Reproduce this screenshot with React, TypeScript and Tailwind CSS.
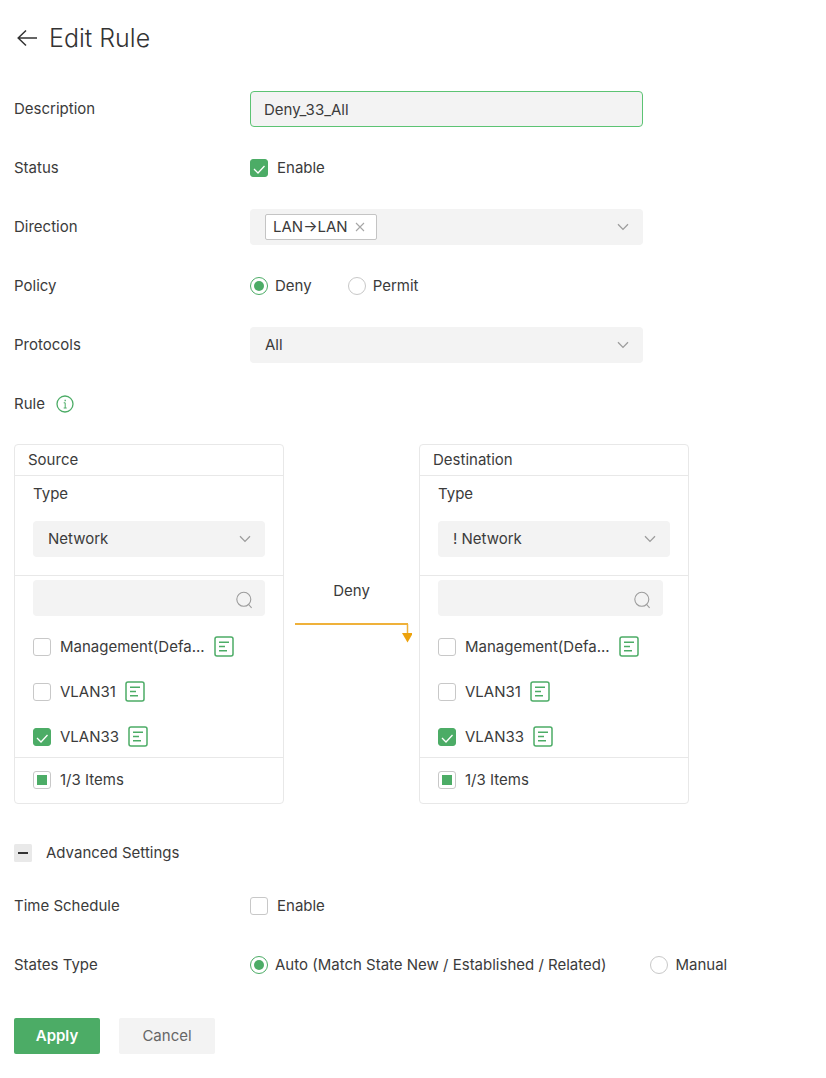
import { ReactNode, useEffect, useRef, useState } from "react";

const networks = [
    { id: "management", name: "Management(Defa..." },
    { id: "vlan31", name: "VLAN31" },
    { id: "vlan33", name: "VLAN33" },
];

interface RowProps {
    label: string;
    htmlFor?: string;
    children: ReactNode;
}

const Row = ({ label, htmlFor, children }: RowProps) => {
    return (
        <div className="flex min-h-9 items-center">
            {htmlFor ? (
                <label htmlFor={htmlFor} className="w-[236px] shrink-0">
                    {label}
                </label>
            ) : (
                <span className="w-[236px] shrink-0">{label}</span>
            )}
            {children}
        </div>
    );
};

const ChevronIcon = () => (
    <svg
        viewBox="0 0 12 8"
        className="pointer-events-none absolute top-1/2 right-3.5 h-2 w-3 -translate-y-1/2"
        fill="none"
        stroke="#9c9c9c"
        strokeWidth="1.3"
    >
        <path d="M1 1.3 L6 6.4 L11 1.3" />
    </svg>
);

const NoteIcon = () => (
    <svg
        viewBox="0 0 20 21"
        className="h-[21px] w-5"
        fill="none"
        stroke="#4cac66"
        strokeWidth="1.5"
    >
        <rect x="1" y="1" width="18" height="19" rx="2" />
        <path d="M5 6.3 H15 M5 10.5 H11 M5 14.8 H13" />
    </svg>
);

interface SelectProps {
    id: string;
    options: string[];
}

const Select = ({ id, options }: SelectProps) => {
    return (
        <div className="relative w-full">
            <select
                id={id}
                className="block h-9 w-full appearance-none rounded-sm bg-[#f3f3f3] px-[15px] outline-none"
            >
                {options.map((option) => (
                    <option key={option}>{option}</option>
                ))}
            </select>
            <ChevronIcon />
        </div>
    );
};

interface CheckboxProps {
    label: string;
    defaultChecked?: boolean;
}

const Checkbox = ({ label, defaultChecked }: CheckboxProps) => {
    return (
        <label className="flex items-center gap-[9px]">
            <span className="relative block size-[18px]">
                <input
                    type="checkbox"
                    defaultChecked={defaultChecked}
                    className="peer block size-full appearance-none rounded-[3px] border border-[#c8c8c8] bg-white checked:border-[#4cac66] checked:bg-[#4cac66]"
                />
                <svg
                    viewBox="0 0 18 18"
                    className="pointer-events-none absolute inset-0 hidden size-full peer-checked:block"
                    fill="none"
                    stroke="#ffffff"
                    strokeWidth="1.3"
                >
                    <path d="M4 10 L8 14 L14.5 7" />
                </svg>
            </span>
            <span>{label}</span>
        </label>
    );
};

interface RadioProps {
    name: string;
    label: string;
    defaultChecked?: boolean;
}

const Radio = ({ name, label, defaultChecked }: RadioProps) => {
    return (
        <label className="flex items-center gap-[7px]">
            <input
                type="radio"
                name={name}
                defaultChecked={defaultChecked}
                className="grid size-[18px] shrink-0 appearance-none place-items-center rounded-full border border-[#c8c8c8] bg-white before:size-2.5 before:rounded-full checked:border-[#4cac66] checked:before:bg-[#4cac66]"
            />
            <span>{label}</span>
        </label>
    );
};

interface NetworkPanelProps {
    id: string;
    title: string;
    type: string;
    searchClassName: string;
}

const NetworkPanel = ({
    id,
    title,
    type,
    searchClassName,
}: NetworkPanelProps) => {
    const allRef = useRef<HTMLInputElement>(null);

    useEffect(() => {
        if (allRef.current) {
            allRef.current.indeterminate = true;
        }
    }, []);

    return (
        <section className="w-[270px] rounded-sm border border-[#e8e8e8]">
            <h2 className="border-b border-[#e8e8e8] px-[13px] py-[5px]">
                {title}
            </h2>
            <div className="border-b border-[#e8e8e8] px-[18px] pt-2 pb-[18px]">
                <label htmlFor={`${id}-type`} className="mb-[17px] block">
                    Type
                </label>
                <Select id={`${id}-type`} options={[type]} />
            </div>
            <div className="px-[18px] pt-1 pb-2.5">
                <div className={`relative ${searchClassName}`}>
                    <input
                        type="search"
                        aria-label={`Search ${title}`}
                        className="block h-9 w-full rounded-sm bg-[#f3f3f3] pr-10 pl-4 outline-none"
                    />
                    <svg
                        viewBox="0 0 18 18"
                        className="pointer-events-none absolute top-[11px] right-3 size-[18px]"
                        fill="none"
                        stroke="#9c9c9c"
                        strokeWidth="1.1"
                    >
                        <circle cx="8.8" cy="8.3" r="7" />
                        <path d="M13.2 13 L16.6 16.8" />
                    </svg>
                </div>
                <ul className="mt-5 space-y-6">
                    {networks.map((network) => (
                        <li
                            key={network.id}
                            className="flex h-[21px] items-center gap-[9px]"
                        >
                            <Checkbox
                                label={network.name}
                                defaultChecked={network.id === "vlan33"}
                            />
                            <button
                                type="button"
                                aria-label={`${network.name} details`}
                            >
                                <NoteIcon />
                            </button>
                        </li>
                    ))}
                </ul>
            </div>
            <label className="flex items-center gap-[9px] border-t border-[#e8e8e8] px-[18px] pt-3 pb-[13px]">
                <input
                    ref={allRef}
                    type="checkbox"
                    className="grid size-[18px] appearance-none place-items-center rounded-[3px] border border-[#c8c8c8] bg-white before:size-2.5 indeterminate:before:bg-[#4cac66]"
                />
                <span>1/3 Items</span>
            </label>
        </section>
    );
};

export default function App() {
    const [directions, setDirections] = useState(["LAN→LAN"]);
    const [advancedOpen, setAdvancedOpen] = useState(true);

    return (
        <form
            className="min-h-screen bg-white px-3.5 pt-5 pb-6 font-['Inter',sans-serif] text-[15px] leading-5 text-[#3b3b3b]"
            onSubmit={(e) => e.preventDefault()}
        >
            <header className="flex h-9 items-center gap-3">
                <button type="button" aria-label="Back" className="pl-[3px]">
                    <svg
                        viewBox="0 0 20 18"
                        className="h-[18px] w-5"
                        fill="none"
                        stroke="#333333"
                        strokeWidth="1.5"
                    >
                        <path d="M20 9 H1.2 M9 1.5 L1.2 9 L9 16.5" />
                    </svg>
                </button>
                <h1 className="text-[25px] font-light text-[#333333]">
                    Edit Rule
                </h1>
            </header>

            <div className="mt-[35px] space-y-[23px]">
                <Row label="Description" htmlFor="description">
                    <input
                        id="description"
                        type="text"
                        defaultValue="Deny_33_All"
                        className="h-9 w-full max-w-[393px] rounded-sm border border-[#5cc373] bg-[#f3f3f3] px-[13px] outline-none"
                    />
                </Row>
                <Row label="Status">
                    <Checkbox label="Enable" defaultChecked />
                </Row>
                <Row label="Direction" htmlFor="direction">
                    <div className="relative flex h-9 w-full max-w-[393px] items-center rounded-sm bg-[#f3f3f3] pl-[15px]">
                        {directions.map((direction) => (
                            <span
                                key={direction}
                                className="flex h-[26px] items-center gap-[7px] rounded-xs border border-[#c4c4c4] bg-white px-[7px]"
                            >
                                {direction}
                                <button
                                    type="button"
                                    aria-label={`Remove ${direction}`}
                                    onClick={() => setDirections([])}
                                    className="pr-1"
                                >
                                    <svg
                                        viewBox="0 0 10 10"
                                        className="size-2.5"
                                        stroke="#a6a6a6"
                                        strokeWidth="1.1"
                                    >
                                        <path d="M1 1 L9 9 M9 1 L1 9" />
                                    </svg>
                                </button>
                            </span>
                        ))}
                        <select
                            id="direction"
                            className="h-full flex-1 appearance-none bg-transparent outline-none"
                        >
                            <option value="" />
                        </select>
                        <ChevronIcon />
                    </div>
                </Row>
                <Row label="Policy">
                    <div className="flex gap-9">
                        <Radio name="policy" label="Deny" defaultChecked />
                        <Radio name="policy" label="Permit" />
                    </div>
                </Row>
                <Row label="Protocols" htmlFor="protocols">
                    <div className="w-full max-w-[393px]">
                        <Select id="protocols" options={["All"]} />
                    </div>
                </Row>
                <div className="flex h-9 items-center gap-[11px]">
                    <span>Rule</span>
                    <svg
                        viewBox="0 0 18 18"
                        className="size-[18px]"
                        fill="none"
                        stroke="#4cac66"
                        strokeWidth="1.3"
                    >
                        <circle cx="9" cy="9" r="8" />
                        <path d="M7.7 7.8 H9.2 V13 M7.7 13 H10.7" strokeWidth="1" />
                        <path d="M9.2 4.8 V6.2" />
                    </svg>
                </div>
            </div>

            <div className="mt-[22px] flex">
                <NetworkPanel
                    id="source"
                    title="Source"
                    type="Network"
                    searchClassName="w-full"
                />
                <div className="flex w-[135px] flex-col items-center pt-[137px]">
                    <span>Deny</span>
                    <svg
                        viewBox="0 0 120 22"
                        className="mt-5 h-[22px] w-[120px]"
                        fill="none"
                        stroke="#efb13a"
                    >
                        <path d="M3 3 H116" strokeWidth="2" />
                        <path d="M115.5 3 V13" strokeWidth="1.5" />
                        <path
                            d="M110 12 H121 L115.5 21.5 Z"
                            fill="#eda20c"
                            stroke="none"
                        />
                    </svg>
                </div>
                <NetworkPanel
                    id="destination"
                    title="Destination"
                    type="! Network"
                    searchClassName="mr-[7px]"
                />
            </div>

            <button
                type="button"
                aria-expanded={advancedOpen}
                onClick={() => setAdvancedOpen(!advancedOpen)}
                className="mt-[39px] flex items-center gap-3.5"
            >
                <svg viewBox="0 0 18 18" className="size-[18px]">
                    <rect width="18" height="18" rx="1.5" fill="#e9e9e9" />
                    <path d="M4 9 H14" stroke="#333333" strokeWidth="2" />
                </svg>
                <span>Advanced Settings</span>
            </button>

            {advancedOpen && (
                <div className="mt-[25px] space-y-[23px]">
                    <Row label="Time Schedule">
                        <Checkbox label="Enable" />
                    </Row>
                    <Row label="States Type">
                        <div className="flex gap-11">
                            <Radio
                                name="states"
                                label="Auto (Match State New / Established / Related)"
                                defaultChecked
                            />
                            <Radio name="states" label="Manual" />
                        </div>
                    </Row>
                </div>
            )}

            <div className="mt-[35px] flex gap-[19px]">
                <button
                    type="submit"
                    className="h-9 w-[86px] rounded-xs bg-[#4cac66] font-semibold text-white"
                >
                    Apply
                </button>
                <button
                    type="button"
                    className="h-9 w-24 rounded-xs bg-[#f3f3f3] text-[#666666]"
                >
                    Cancel
                </button>
            </div>
        </form>
    );
}
